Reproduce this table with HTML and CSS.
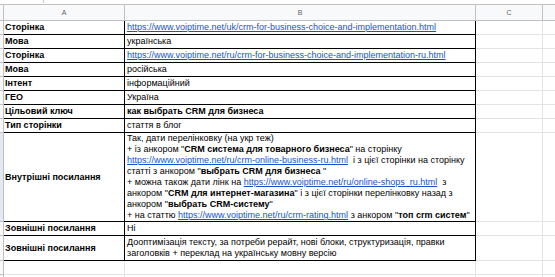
FILE: index.html
```html
<!DOCTYPE html>
<html lang="uk">
<head>
<meta charset="utf-8">
<title>Sheet</title>
<link rel="stylesheet" href="styles.css">
</head>
<body>
<div class="topstrip"><span class="tick"></span></div>
<div class="sheet">
  <div class="rh hdr"></div>
  <div class="colh">A</div>
  <div class="colh">B</div>
  <div class="colh">C</div>
  <div class="colh last"></div>

  <div class="rh"></div>
  <div class="c a">Сторінка</div>
  <div class="c b"><a href="#">https://www.voiptime.net/uk/crm-for-business-choice-and-implementation.html</a></div>
  <div class="c g"></div><div class="c g last"></div>

  <div class="rh"></div>
  <div class="c a">Мова</div>
  <div class="c b">українська</div>
  <div class="c g"></div><div class="c g last"></div>

  <div class="rh"></div>
  <div class="c a">Сторінка</div>
  <div class="c b"><a href="#">https://www.voiptime.net/ru/crm-for-business-choice-and-implementation-ru.html</a></div>
  <div class="c g"></div><div class="c g last"></div>

  <div class="rh"></div>
  <div class="c a">Мова</div>
  <div class="c b">російська</div>
  <div class="c g"></div><div class="c g last"></div>

  <div class="rh"></div>
  <div class="c a">Інтент</div>
  <div class="c b">інформаційний</div>
  <div class="c g"></div><div class="c g last"></div>

  <div class="rh"></div>
  <div class="c a">ГЕО</div>
  <div class="c b">Україна</div>
  <div class="c g"></div><div class="c g last"></div>

  <div class="rh"></div>
  <div class="c a">Цільовий ключ</div>
  <div class="c b"><b>как выбрать CRM для бизнеса</b></div>
  <div class="c g"></div><div class="c g last"></div>

  <div class="rh"></div>
  <div class="c a">Тип сторінки</div>
  <div class="c b">стаття в блог</div>
  <div class="c g"></div><div class="c g last"></div>

  <div class="rh sel"></div>
  <div class="c a">Внутрішні посилання</div>
  <div class="c b multi">
    <span>Так, дати перелінковку (на укр теж)</span>
    <span>+ із анкором "<b>CRM система для товарного бизнеса</b>" на сторінку</span>
    <span><a href="#">https://www.voiptime.net/ru/crm-online-business-ru.html</a>&nbsp; і з цієї сторінки на сторінку</span>
    <span>статті з анкором "<b>выбрать CRM для бизнеса</b> "</span>
    <span>+ можна також дати лінк на <a href="#">https://www.voiptime.net/ru/online-shops_ru.html</a>&nbsp; з</span>
    <span>анкором "<b>CRM для интернет-магазина</b>" і з цієї сторінки перелінковку назад з</span>
    <span>анкором "<b>выбрать CRM-систему</b>"</span>
    <span>+ на статтю <a href="#">https://www.voiptime.net/ru/crm-rating.html</a> з анкором "<b>топ crm систем</b>"</span>
  </div>
  <div class="c g"></div><div class="c g last"></div>

  <div class="rh"></div>
  <div class="c a">Зовнішні посилання</div>
  <div class="c b">Ні</div>
  <div class="c g"></div><div class="c g last"></div>

  <div class="rh"></div>
  <div class="c a">Зовнішні посилання</div>
  <div class="c b multi">
    <span>Дооптимізація тексту, за потреби рерайт, нові блоки, структуризація, правки</span>
    <span>заголовків + переклад на українську мовну версію</span>
  </div>
  <div class="c g"></div><div class="c g last"></div>

  <div class="rh"></div>
  <div class="c g"></div><div class="c g"></div><div class="c g"></div><div class="c g last"></div>

  <div class="rh"></div>
  <div class="c g"></div><div class="c g"></div><div class="c g"></div><div class="c g last"></div>
</div>
</body>
</html>
```

FILE: styles.css
```css
* { box-sizing: border-box; }
html, body { margin: 0; padding: 0; background: #fff; overflow: hidden; }
body { width: 555px; height: 277px; font-family: "Liberation Sans", Arial, sans-serif; font-size: 9px; color: #000; }

.topstrip { height: 4px; background: #fff; position: relative; }
.tick { position: absolute; left: 43px; top: 0; width: 1px; height: 3px; background: #c8c8c8; }

.sheet {
  display: grid;
  grid-template-columns: 4px 121px 351px 67px 1fr;
  grid-template-rows: 17px repeat(8, 14px) 89px 14px 25px 14px 14px;
}

.rh { background: #f8f9fa; border-right: 1px solid #c0c0c0; border-bottom: 1px solid #c0c0c0; }
.rh.hdr { border-top: 1px solid #c0c0c0; }
.rh.sel { background: #e3e9f4; }

.colh {
  background: #f8f9fa;
  border-top: 1px solid #c0c0c0;
  border-bottom: 1px solid #c0c0c0;
  border-right: 1px solid #c0c0c0;
  color: #5f6368;
  font-size: 7px;
  display: flex; align-items: center; justify-content: center;
}
.colh.last { border-right: none; }

.c {
  border-right: 1px solid #000;
  border-bottom: 1px solid #000;
  display: flex; align-items: center;
  white-space: nowrap; overflow: hidden;
  line-height: 11px;
}
.c.a { font-weight: bold; padding-left: 1px; }
.c.b { padding-left: 2px; }
.c.g { border-right-color: #e2e3e3; border-bottom-color: #e2e3e3; }
.c.last { border-right: none; }

.multi { flex-direction: column; align-items: flex-start; justify-content: center; }
.multi span { display: block; height: 11px; }

a { color: #1155cc; text-decoration: underline; }
b { font-weight: bold; }
```
